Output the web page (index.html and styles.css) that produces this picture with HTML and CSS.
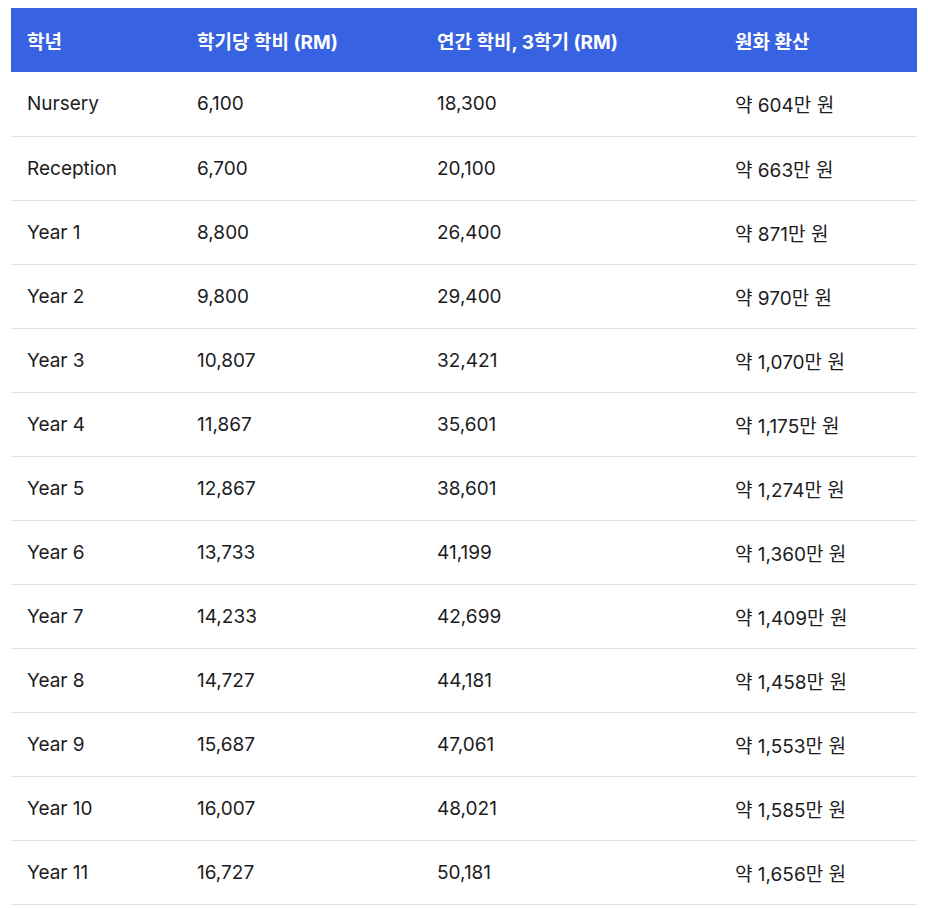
FILE: index.html
```html
<!DOCTYPE html>
<html lang="ko">
<head>
<meta charset="utf-8">
<link rel="stylesheet" href="styles.css">
</head>
<body>
<table class="fees">
<thead>
<tr><th class="c1">학년</th><th class="c2">학기당 학비 (RM)</th><th class="c3">연간 학비, 3학기 (RM)</th><th class="c4">원화 환산</th></tr>
</thead>
<tbody>
<tr><td>Nursery</td><td>6,100</td><td>18,300</td><td>약 604만 원</td></tr>
<tr><td>Reception</td><td>6,700</td><td>20,100</td><td>약 663만 원</td></tr>
<tr><td>Year 1</td><td>8,800</td><td>26,400</td><td>약 871만 원</td></tr>
<tr><td>Year 2</td><td>9,800</td><td>29,400</td><td>약 970만 원</td></tr>
<tr><td>Year 3</td><td>10,807</td><td>32,421</td><td>약 1,070만 원</td></tr>
<tr><td>Year 4</td><td>11,867</td><td>35,601</td><td>약 1,175만 원</td></tr>
<tr><td>Year 5</td><td>12,867</td><td>38,601</td><td>약 1,274만 원</td></tr>
<tr><td>Year 6</td><td>13,733</td><td>41,199</td><td>약 1,360만 원</td></tr>
<tr><td>Year 7</td><td>14,233</td><td>42,699</td><td>약 1,409만 원</td></tr>
<tr><td>Year 8</td><td>14,727</td><td>44,181</td><td>약 1,458만 원</td></tr>
<tr><td>Year 9</td><td>15,687</td><td>47,061</td><td>약 1,553만 원</td></tr>
<tr><td>Year 10</td><td>16,007</td><td>48,021</td><td>약 1,585만 원</td></tr>
<tr><td>Year 11</td><td>16,727</td><td>50,181</td><td>약 1,656만 원</td></tr>
</tbody>
</table>
</body>
</html>
```
FILE: styles.css
```css
html, body {
  margin: 0;
  padding: 0;
  background: #ffffff;
}
body {
  padding: 8px 11px;
  font-family: Inter, "Noto Sans CJK KR", sans-serif;
  color: #1c1c1e;
}
.fees {
  width: 906px;
  border-collapse: collapse;
  table-layout: fixed;
  font-size: 19px;
}
.fees th {
  background: #3762e2;
  color: #ffffff;
  font-weight: 700;
  text-align: left;
  height: 64px;
  padding: 0 16px;
  box-sizing: border-box;
}
.c1 { width: 170px; }
.c2 { width: 240px; }
.c3 { width: 298px; }
.c4 { width: 198px; }
.fees td {
  height: 64px;
  padding: 0 16px;
  box-sizing: border-box;
  border-bottom: 1px solid #e4e4e7;
  font-weight: 400;
}
```
